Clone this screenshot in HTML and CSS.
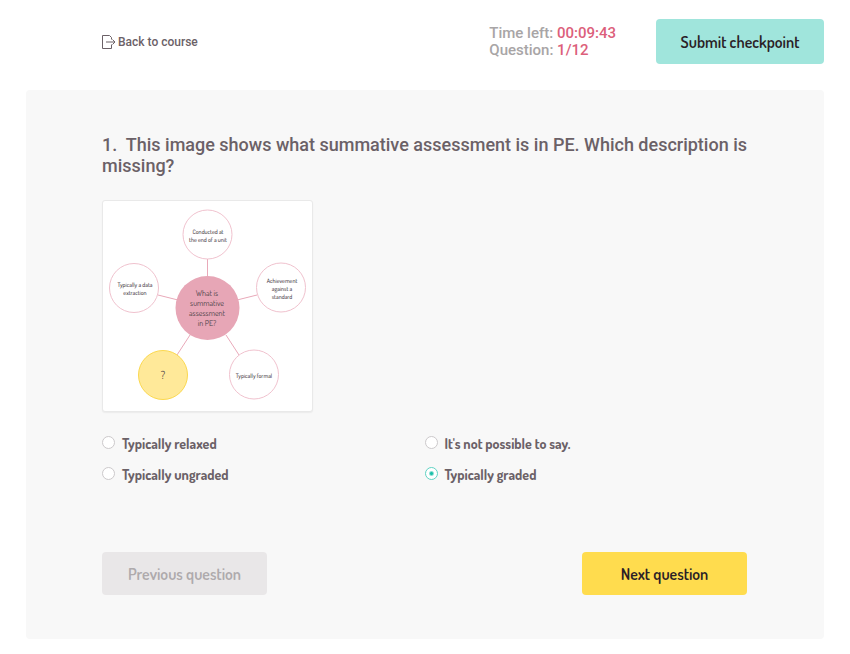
FILE: index.html
```html
<!DOCTYPE html>
<html lang="en">
<head>
  <meta charset="UTF-8" />
  <meta name="viewport" content="width=device-width, initial-scale=1" />
  <title>Checkpoint</title>
  <link rel="stylesheet" href="styles.css">
</head>
<body>

<header class="topbar">
  <a class="back" href="#">
    <svg width="14" height="14" viewBox="0 0 14 14" fill="none" stroke="#6b6167" aria-hidden="true">
      <path d="M9.500 4.500V2.500L7.500 .5H.5v13h9V9.500M4 7h9M10.500 4.500L13 7l-2.500 2.500" />
    </svg>
    <span>Back to course</span>
  </a>
  <div class="status">
    <div>Time left: <span class="value">00:09:43</span></div>
    <div>Question: <span class="value">1/12</span></div>
  </div>
  <button class="btn submit" type="button">Submit checkpoint</button>
</header>

<main class="card">
  <h1 class="question">1.&nbsp; This image shows what summative assessment is in PE. Which description is missing?</h1>

  <svg class="diagram" width="209" height="210" viewBox="103 201 209 210" role="img" aria-label="Summative assessment in PE">
    <g class="lines">
      <path d="M207.500 259v20M158 295l20 5M257 295l-20 5M190 335l-13 20M226 335l13 20" />
    </g>
    <g class="bubbles">
      <circle cx="207.500" cy="234.500" r="24.500" />
      <circle cx="134" cy="288" r="24.500" />
      <circle cx="281" cy="287.500" r="24.500" />
      <circle cx="254" cy="374.500" r="24.500" />
    </g>
    <circle class="center" cx="207.500" cy="308" r="32" />
    <circle class="missing" cx="163" cy="375" r="24.500" />
    <g class="small">
      <text x="208" y="234">Conducted at</text>
      <text x="208" y="242">the end of a unit</text>
      <text x="135" y="287">Typically a data</text>
      <text x="135" y="295">extraction</text>
      <text x="282" y="283">Achievement</text>
      <text x="282" y="291">against a</text>
      <text x="282" y="299">standard</text>
      <text x="254" y="378">Typically formal</text>
    </g>
    <g class="medium">
      <text x="207" y="296">What is</text>
      <text x="207" y="306">summative</text>
      <text x="207" y="316">assessment</text>
      <text x="207" y="326">in PE?</text>
    </g>
    <text class="mark" x="163" y="379">?</text>
  </svg>

  <form>
    <div class="options">
      <label class="option"><input type="radio" name="answer"><span>Typically relaxed</span></label>
      <label class="option"><input type="radio" name="answer"><span>It's not possible to say.</span></label>
      <label class="option"><input type="radio" name="answer"><span>Typically ungraded</span></label>
      <label class="option"><input type="radio" name="answer" checked><span>Typically graded</span></label>
    </div>
    <div class="actions">
      <button class="btn previous" type="button" disabled>Previous question</button>
      <button class="btn next" type="button">Next question</button>
    </div>
  </form>
</main>

</body>
</html>
```

FILE: styles.css
```css
* {
  box-sizing: border-box;
}
body {
  margin: 0;
  padding: 19px 26px 15px;
  background: #fff;
  color: #6b6167;
  font-family: Roboto, "Liberation Sans", sans-serif;
}
.topbar {
  display: flex;
  align-items: center;
  padding-left: 76px;
  margin-bottom: 26px;
}
.back {
  display: flex;
  align-items: center;
  gap: 2px;
  margin-right: auto;
  color: #6b6167;
  font-size: 12px;
  font-weight: 500;
  text-decoration: none;
}
.status {
  margin-right: 40px;
  color: #a8a5a6;
  font-size: 15px;
  line-height: 17px;
  font-weight: 500;
}
.value {
  color: #dc5f7b;
}
.btn {
  border: none;
  border-radius: 4px;
  color: #2b1f27;
  font-family: Dosis, Lato, sans-serif;
  font-size: 16px;
  font-weight: 600;
  cursor: pointer;
}
.submit {
  width: 168px;
  height: 45px;
  background: #a0e5dc;
}
.card {
  padding: 44px 77px 44px 76px;
  background: #f8f8f8;
  border-radius: 4px;
}
.question {
  margin: 0 0 24px;
  font-size: 18px;
  line-height: 21px;
  font-weight: 500;
}
.diagram {
  display: block;
  box-sizing: content-box;
  background: #fff;
  border: 1px solid #e9e9e9;
  border-radius: 3px;
  box-shadow: 0 1px 1px #ececec;
  font-family: Dosis, "Open Sans", sans-serif;
  text-anchor: middle;
  text-rendering: geometricPrecision;
  fill: #4b4248;
}
.lines {
  fill: none;
  stroke: #e9a9b9;
}
.bubbles {
  fill: #fff;
  stroke: #f0c2ce;
}
.center {
  fill: #e7a6b6;
}
.missing {
  fill: #ffe999;
  stroke: #fbd84f;
}
.small {
  font-size: 6px;
  font-weight: 500;
}
.medium {
  font-size: 8px;
}
.mark {
  font-size: 11px;
}
.options {
  display: grid;
  grid-template-columns: 1fr 1fr;
  row-gap: 11px;
  margin-top: 22px;
}
.option {
  display: flex;
  align-items: flex-start;
  gap: 7px;
  font-family: Dosis, Lato, sans-serif;
  font-size: 14px;
  line-height: 20px;
  font-weight: 700;
}
.option input {
  appearance: none;
  flex: none;
  width: 13px;
  height: 13px;
  margin: 2px 0 0;
  background: #fff;
  border: 1px solid #ccc9cb;
  border-radius: 50%;
}
.option input:checked {
  border-color: #5fd3c4;
  background: radial-gradient(circle, #1bbfa9 1px, #fff 3px);
}
.actions {
  display: flex;
  justify-content: space-between;
  margin-top: 67px;
}
.previous,
.next {
  width: 165px;
  height: 43px;
}
.previous {
  background: #e9e7e8;
  color: #aeaaac;
  cursor: default;
}
.next {
  background: #ffdc4e;
}
```
